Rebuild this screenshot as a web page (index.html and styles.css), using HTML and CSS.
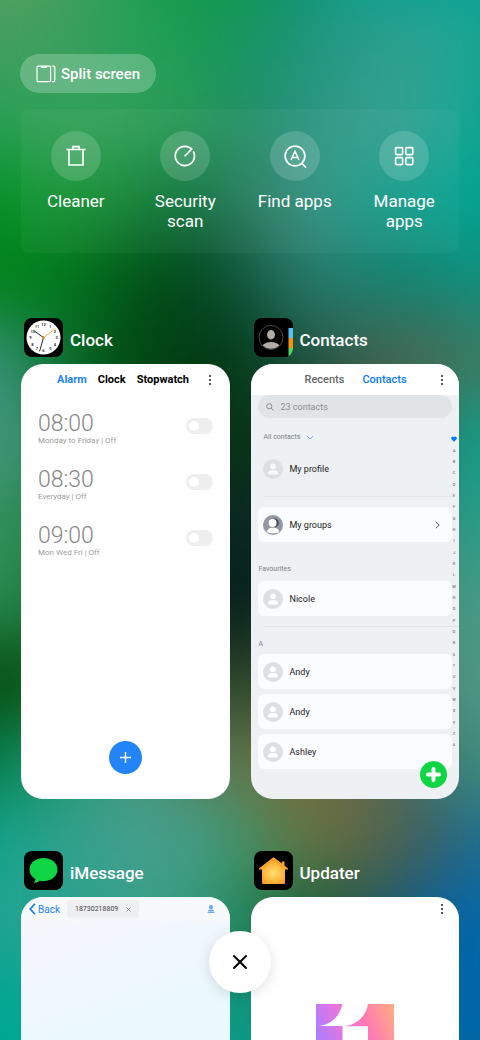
FILE: index.html
```html
<!DOCTYPE html>
<html lang="en">
<head>
    <meta charset="UTF-8">
    <meta name="viewport" content="width=device-width, initial-scale=1.0">
    <title>Recent apps</title>
    <link rel="stylesheet" href="styles.css">
</head>
<body>

    <!-- blurred wallpaper, one colour band per row -->
    <div class="backdrop" aria-hidden="true">
        <div class="wallpaper">
            <i></i><i></i><i></i><i></i><i></i><i></i><i></i><i></i><i></i><i></i><i></i><i></i><i></i><i></i><i></i>
        </div>
    </div>

    <main class="recents">
        <button class="split" type="button">
            <svg width="20" height="18" viewBox="0 0 20 18" fill="none" stroke="#fff" stroke-width="1.2">
                <rect x="1" y="1.2" width="13.6" height="15.4" rx="1.2"/>
                <path d="M5 1.6h5.600v.7a.6.6 0 0 1-.6.6H5.600a.6.6 0 0 1-.6-.6z" fill="#fff" stroke="none"/>
                <path d="M16.200 1.200h1.600a1 1 0 0 1 1 1v13.400a1 1 0 0 1-1 1h-1.600"/>
            </svg>
            Split screen
        </button>

        <nav class="tools">
            <button class="tool" type="button">
                <span class="tool-icon">
                    <svg width="24" height="24" viewBox="0 0 24 24" fill="none" stroke="#fff" stroke-width="1.700">
                        <path d="M2.500 5.500h19M5 5.500v15.500h14V5.500M8.800 5.300V2.700h6.400v2.600" stroke-linejoin="round"/>
                    </svg>
                </span>
                Cleaner
            </button>
            <button class="tool" type="button">
                <span class="tool-icon">
                    <svg width="24" height="24" viewBox="0 0 24 24" fill="none" stroke="#fff" stroke-width="1.700" stroke-linecap="round" stroke-linejoin="round">
                        <path d="M20.600 8A9.600 9.600 0 1 1 15.800 3.200L18.800 5 12 11.900"/>
                    </svg>
                </span>
                Security scan
            </button>
            <button class="tool" type="button">
                <span class="tool-icon">
                    <svg width="24" height="24" viewBox="0 0 24 24" fill="none" stroke="#fff" stroke-width="1.700">
                        <circle cx="12" cy="12" r="9.900"/>
                        <path d="M18.500 19l4.500 4.500"/>
                        <path d="M8 16l4-8.800L16 16M9.400 13.400h5.200" stroke-width="1.500"/>
                    </svg>
                </span>
                Find apps
            </button>
            <button class="tool" type="button">
                <span class="tool-icon">
                    <svg width="24" height="24" viewBox="0 0 24 24" fill="none" stroke="#fff" stroke-width="1.600">
                        <rect x="3.600" y="3.600" width="7" height="7" rx="1"/>
                        <rect x="13.800" y="3.600" width="7" height="7" rx="1"/>
                        <rect x="3.600" y="13.600" width="7" height="7" rx="1"/>
                        <rect x="13.800" y="13.600" width="7" height="7" rx="1"/>
                    </svg>
                </span>
                Manage apps
            </button>
        </nav>

        <div class="apps">

            <section class="app">
                <h2 class="app-title">
                    <svg class="app-icon" viewBox="0 0 39 39">
                        <rect width="39" height="39" rx="8"/>
                        <circle cx="19.500" cy="19.500" r="17" fill="#fff"/>
                        <g class="dial">
                            <text x="19.500" y="8">12</text><text x="26.300" y="10">1</text><text x="31" y="14.800">2</text>
                            <text x="32.700" y="21">3</text><text x="31" y="27.700">4</text><text x="26.300" y="32.300">5</text>
                            <text x="19.500" y="34.300">6</text><text x="12.900" y="32.300">7</text><text x="8.300" y="27.700">8</text>
                            <text x="6.500" y="21">9</text><text x="8.800" y="14.800">10</text><text x="13.100" y="10">11</text>
                        </g>
                        <path d="M19.500 19.500L11 13.500M19.500 19.500L15.700 33" stroke="#111" stroke-width=".9" stroke-linecap="round"/>
                        <path d="M17.800 21L31.500 10.500" stroke="#f79a1c" stroke-width=".8"/>
                        <circle cx="19.500" cy="19.500" r="1.200" fill="#d98a26"/>
                    </svg>
                    Clock
                </h2>
                <div class="card clock">
                    <header class="bar">
                        <div class="tabs clock-tabs">
                            <a class="active" href="#alarm">Alarm</a>
                            <a href="#clock">Clock</a>
                            <a href="#stopwatch">Stopwatch</a>
                        </div>
                        <button class="more" type="button" aria-label="More"><svg width="4" height="12" viewBox="0 0 4 12"><circle cx="2" cy="2" r=".9"/><circle cx="2" cy="6" r=".9"/><circle cx="2" cy="10" r=".9"/></svg></button>
                    </header>
                    <div class="alarms">
                        <label class="alarm">
                            <span><b>08:00</b><small>Monday to Friday | Off</small></span>
                            <input class="switch" type="checkbox">
                        </label>
                        <label class="alarm">
                            <span><b>08:30</b><small>Everyday | Off</small></span>
                            <input class="switch" type="checkbox">
                        </label>
                        <label class="alarm">
                            <span><b>09:00</b><small>Mon Wed Fri | Off</small></span>
                            <input class="switch" type="checkbox">
                        </label>
                    </div>
                    <button class="add-alarm" type="button" aria-label="Add alarm">
                        <svg width="13" height="13" viewBox="0 0 13 13" stroke="#fff" stroke-width="1.400"><path d="M6.500 1v11M1 6.500h11"/></svg>
                    </button>
                </div>
            </section>

            <section class="app">
                <h2 class="app-title">
                    <svg class="app-icon" viewBox="0 0 39 39">
                        <defs>
                            <clipPath id="tile"><rect width="39" height="39" rx="8"/></clipPath>
                            <clipPath id="face"><circle cx="17" cy="19.500" r="11.300"/></clipPath>
                        </defs>
                        <g clip-path="url(#tile)">
                            <rect width="39" height="39"/>
                            <path d="M34.500 10H39v10h-4.500z" fill="#5ac0f5"/>
                            <path d="M34.500 20H39v10h-4.500z" fill="#f8900f"/>
                            <path d="M34.500 30H39v9h-4.500z" fill="#4cd363"/>
                        </g>
                        <circle cx="17" cy="19.500" r="12" fill="none" stroke="#777" stroke-width=".6"/>
                        <g clip-path="url(#face)" fill="#b5aca5">
                            <ellipse cx="17" cy="16.700" rx="4" ry="4.700"/>
                            <ellipse cx="17" cy="30.500" rx="10" ry="6.500"/>
                        </g>
                    </svg>
                    Contacts
                </h2>
                <div class="card contacts">
                    <header class="bar">
                        <div class="tabs contact-tabs">
                            <a href="#recents">Recents</a>
                            <a class="active" href="#contacts">Contacts</a>
                        </div>
                        <button class="more" type="button" aria-label="More"><svg width="4" height="12" viewBox="0 0 4 12"><circle cx="2" cy="2" r=".9"/><circle cx="2" cy="6" r=".9"/><circle cx="2" cy="10" r=".9"/></svg></button>
                    </header>
                    <div class="contact-body">
                        <label class="search">
                            <svg width="8" height="8" viewBox="0 0 9 9" fill="none" stroke="#7c8083"><circle cx="3.700" cy="3.700" r="2.900"/><path d="M5.900 5.900l2.600 2.600"/></svg>
                            <input type="search" placeholder="23 contacts" aria-label="Search contacts">
                        </label>
                        <button class="filter" type="button">
                            All contacts
                            <svg width="8" height="5" viewBox="0 0 8 5" fill="none" stroke="#6c8fe8" stroke-width=".8"><path d="M.8.8L4 4 7.200.8"/></svg>
                        </button>
                        <a class="person plain" href="#me">
                            <svg class="avatar" viewBox="0 0 20 20"><circle cx="10" cy="10" r="10" fill="#dcdfe4"/><circle cx="10" cy="7.300" r="2.900" fill="#f8f9fb"/><path d="M5 14.300c0-2 1.600-3 3-3h4c1.400 0 3 1 3 3q0 1.200-1.200 1.200H6.200Q5 15.500 5 14.300z" fill="#f8f9fb"/></svg>
                            My profile
                        </a>
                        <hr>
                        <a class="person" href="#groups">
                            <svg class="avatar" viewBox="0 0 20 20">
                                <clipPath id="group"><circle cx="10" cy="10" r="10"/></clipPath>
                                <g clip-path="url(#group)">
                                    <rect width="20" height="20" fill="#9297a6"/>
                                    <circle cx="11.500" cy="7.800" r="4.400" fill="#484c58"/>
                                    <circle cx="9.600" cy="8" r="4" fill="#fff"/>
                                    <path d="M4 17c0-3 2.500-4.200 6-4.200s6 1.200 6 4.200c-2 1.800-10 1.800-12 0z" fill="#fff"/>
                                </g>
                            </svg>
                            My groups
                            <svg class="chevron" width="5" height="8" viewBox="0 0 5 8" fill="none" stroke="#555"><path d="M.8.8L4.200 4 .8 7.200"/></svg>
                        </a>
                        <h3 class="favourites">Favourites</h3>
                        <a class="person" href="#nicole">
                            <svg class="avatar" viewBox="0 0 20 20"><circle cx="10" cy="10" r="10" fill="#dcdfe4"/><circle cx="10" cy="7.300" r="2.900" fill="#fff"/><path d="M5 14.300c0-2 1.600-3 3-3h4c1.400 0 3 1 3 3q0 1.200-1.200 1.200H6.200Q5 15.500 5 14.300z" fill="#fff"/></svg>
                            Nicole
                        </a>
                        <hr>
                        <h3>A</h3>
                        <div class="people">
                            <a class="person" href="#andy">
                                <svg class="avatar" viewBox="0 0 20 20"><circle cx="10" cy="10" r="10" fill="#dcdfe4"/><circle cx="10" cy="7.300" r="2.900" fill="#fff"/><path d="M5 14.300c0-2 1.600-3 3-3h4c1.400 0 3 1 3 3q0 1.200-1.200 1.200H6.200Q5 15.500 5 14.300z" fill="#fff"/></svg>
                                Andy
                            </a>
                            <a class="person" href="#andy-2">
                                <svg class="avatar" viewBox="0 0 20 20"><circle cx="10" cy="10" r="10" fill="#dcdfe4"/><circle cx="10" cy="7.300" r="2.900" fill="#fff"/><path d="M5 14.300c0-2 1.600-3 3-3h4c1.400 0 3 1 3 3q0 1.200-1.200 1.200H6.200Q5 15.500 5 14.300z" fill="#fff"/></svg>
                                Andy
                            </a>
                            <a class="person" href="#ashley">
                                <svg class="avatar" viewBox="0 0 20 20"><circle cx="10" cy="10" r="10" fill="#dcdfe4"/><circle cx="10" cy="7.300" r="2.900" fill="#fff"/><path d="M5 14.300c0-2 1.600-3 3-3h4c1.400 0 3 1 3 3q0 1.200-1.200 1.200H6.200Q5 15.500 5 14.300z" fill="#fff"/></svg>
                                Ashley
                            </a>
                        </div>
                    </div>
                    <div class="index">
                        <svg width="6" height="6" viewBox="0 0 6 6"><path d="M3 5.800L.5 3.300C-.6 1.500 1.500-.4 3 1.100 4.500-.4 6.600 1.500 5.500 3.300z" fill="#0b7bf5"/></svg>
                        <span>A</span><span>B</span><span>C</span><span>D</span><span>E</span><span>F</span><span>G</span><span>H</span><span>I</span><span>J</span><span>K</span><span>L</span><span>M</span><span>N</span><span>O</span><span>P</span><span>Q</span><span>R</span><span>S</span><span>T</span><span>U</span><span>V</span><span>W</span><span>X</span><span>Y</span><span>Z</span><span>#</span>
                    </div>
                    <button class="add-contact" type="button" aria-label="Add contact">
                        <svg width="15" height="15" viewBox="0 0 15 15" stroke="#fff" stroke-width="4" stroke-linecap="round"><path d="M7.500 2v11M2 7.500h11"/></svg>
                    </button>
                </div>
            </section>

            <section class="app">
                <h2 class="app-title">
                    <svg class="app-icon" viewBox="0 0 39 39">
                        <rect width="39" height="39" rx="8"/>
                        <path d="M19.500 7C11.500 7 5.500 12 5.500 18.600c0 4 2.200 7.500 5.900 9.600-.1 1.300-.6 2.500-1.600 3.700 2.400 0 4.300-.9 5.900-2.200 1.200.3 2.500.5 3.800.5 8 0 14-5 14-11.600S27.500 7 19.500 7z" fill="#10d544"/>
                    </svg>
                    iMessage
                </h2>
                <div class="card message">
                    <header class="bar message-bar">
                        <a class="back" href="#back">
                            <svg width="7" height="12" viewBox="0 0 7 12" fill="none" stroke="#087bf5" stroke-width="1.600"><path d="M6 .8L1.200 6 6 11.200"/></svg>
                            Back
                        </a>
                        <button class="number" type="button">
                            18730218809
                            <svg width="5" height="5" viewBox="0 0 5 5" stroke="#777" stroke-width=".7"><path d="M.4.4l4.200 4.200M4.600.4L.4 4.600"/></svg>
                        </button>
                        <svg class="user" width="8" height="8" viewBox="0 0 8 8" fill="#6aa9f2"><circle cx="4" cy="2.100" r="2.100"/><path d="M.8 6.600c.2-1.800 1.600-2.100 3.200-2.100s3 .3 3.200 2.100zM.6 6.900h6.800V8H.6z"/></svg>
                    </header>
                </div>
            </section>

            <section class="app">
                <h2 class="app-title">
                    <svg class="app-icon" viewBox="0 0 39 39">
                        <defs>
                            <radialGradient id="home" cx=".5" cy=".58" r=".55"><stop stop-color="#ffe071"/><stop offset="1" stop-color="#fb9a1c"/></radialGradient>
                        </defs>
                        <rect width="39" height="39" rx="8"/>
                        <path d="M19.500 6.200L28 12.600V10.600h2.500v4L34 17.500v1h-3V32q0 1-1 1H9q-1 0-1-1V18.500H5v-1z" fill="url(#home)"/>
                        <path d="M5 18L19.500 6.400 34 18h-3.400L19.500 9.400 8.400 18z" fill="#fba42c"/>
                    </svg>
                    Updater
                </h2>
                <div class="card updater">
                    <header class="bar updater-bar">
                        <button class="more" type="button" aria-label="More"><svg width="4" height="12" viewBox="0 0 4 12"><circle cx="2" cy="2" r=".9"/><circle cx="2" cy="6" r=".9"/><circle cx="2" cy="10" r=".9"/></svg></button>
                    </header>
                    <svg class="eleven" width="78" height="78" viewBox="0 0 78 78">
                        <defs>
                            <linearGradient id="sunset" x1="0" y1=".4" x2="1" y2="0"><stop stop-color="#a97eff"/><stop offset=".3" stop-color="#e077e3"/><stop offset=".6" stop-color="#ff79b5"/><stop offset="1" stop-color="#ffad80"/></linearGradient>
                        </defs>
                        <path d="M0 0H26.500C23 14 14 21 2 22H26.500V78H0zM52 0H78V78H52V22.300H28C40 21 50 13 52 0z" fill="url(#sunset)"/>
                    </svg>
                </div>
            </section>

        </div>
    </main>

    <button class="close" type="button" aria-label="Close all">
        <svg width="16" height="16" viewBox="0 0 16 16" stroke="#000" stroke-width="2" stroke-linecap="round"><path d="M2 2l12 12M14 2L2 14"/></svg>
    </button>

</body>
</html>
```
FILE: styles.css
```css
* {
    margin: 0;
    padding: 0;
    box-sizing: border-box;
}

body {
    position: relative;
    height: 100vh;
    overflow: hidden;
    font-family: Roboto, 'Noto Sans', sans-serif;
    background-color: #12805a;
    color: #222;
}

button {
    border: 0;
    background: none;
    color: inherit;
    font: inherit;
}

a {
    color: inherit;
    text-decoration: none;
}

svg {
    display: block;
    flex: none;
}

/* Wallpaper */
.backdrop {
    position: absolute;
    inset: 0;
    overflow: hidden;
}

.wallpaper {
    position: absolute;
    inset: -80px -12.5vw;
    display: flex;
    flex-direction: column;
    filter: blur(34px);
}

.wallpaper i {
    flex: 1;
}

.wallpaper i:nth-child(1) { background: linear-gradient(90deg, #5f9f62, #5f9f62, #4a9f5c, #2ba057, #0c9a44, #109448, #109270, #06a08e, #08a294, #06a496, #06a496); }
.wallpaper i:nth-child(2) { background: linear-gradient(90deg, #4a9f5f, #459f5f, #3a9f5e, #2ba05a, #1a9d52, #169560, #1d937a, #2a9c8c, #2fa291, #18a594, #10a594); }
.wallpaper i:nth-child(3) { background: linear-gradient(90deg, #28a055, #28a055, #35a25c, #33a25a, #2a9c56, #208f63, #279280, #379f8d, #34a391, #0ea594, #00a594); }
.wallpaper i:nth-child(4) { background: linear-gradient(90deg, #009020, #049026, #159634, #148a34, #067038, #28785a, #3a9080, #1e9a8a, #0ca08e, #00a592, #00a592); }
.wallpaper i:nth-child(5) { background: linear-gradient(90deg, #008010, #008018, #007a1c, #025a18, #014418, #0c5038, #2e7a6c, #1a7f6d, #148470, #109080, #109080); }
.wallpaper i:nth-child(6) { background: linear-gradient(90deg, #459c8a, #38947c, #0a702c, #014c12, #013c12, #023816, #185040, #45604f, #4a6650, #407860, #388468); }
.wallpaper i:nth-child(7) { background: linear-gradient(90deg, #4a9c88, #4a9c88, #258050, #02501a, #02380e, #03300e, #1b3a2c, #284c3c, #247660, #14a592, #00a894); }
.wallpaper i:nth-child(8) { background: linear-gradient(90deg, #379860, #379560, #207840, #064020, #082820, #082622, #102a28, #205048, #308870, #2ca08e, #20a490); }
.wallpaper i:nth-child(9) { background: linear-gradient(90deg, #2a9455, #2a9055, #187038, #064020, #052018, #021a1a, #103020, #285040, #388870, #4c9f8c, #4ca08e); }
.wallpaper i:nth-child(10) { background: linear-gradient(90deg, #003800, #054808, #106020, #306038, #304828, #204028, #485030, #506848, #488070, #529c8c, #589e90); }
.wallpaper i:nth-child(11) { background: linear-gradient(90deg, #007844, #067c4a, #209870, #409c80, #508868, #607448, #806838, #686848, #407068, #409080, #449484); }
.wallpaper i:nth-child(12) { background: linear-gradient(90deg, #08a68e, #12a48c, #30a08c, #42a08e, #48a090, #3c966c, #687640, #626844, #3f5c58, #1c6e98, #1070a4); }
.wallpaper i:nth-child(13) { background: linear-gradient(90deg, #28a494, #22a492, #28a290, #34a088, #3c9c80, #208a60, #165a28, #245850, #105c90, #0068b0, #0068b4); }
.wallpaper i:nth-child(14) { background: linear-gradient(90deg, #00a894, #00a894, #08a490, #10a08c, #149c84, #10987c, #108878, #087888, #00689c, #0064ac, #0064b0); }
.wallpaper i:nth-child(15) { background: linear-gradient(90deg, #00a894, #00a894, #00a894, #04a490, #08a48c, #08a08c, #088c88, #047c90, #006c9c, #0066a8, #0066b0); }

.recents {
    position: relative;
    height: 100%;
    overflow: hidden;
    padding: 54px 21px 0;
}

.split {
    display: flex;
    align-items: center;
    gap: 5px;
    height: 39px;
    padding: 0 16px;
    margin-left: -1px;
    border-radius: 20px;
    background: rgba(255, 255, 255, 0.23);
    color: #fff;
    font-size: 15px;
    font-weight: 500;
}

/* Shortcuts */
.tools {
    display: grid;
    grid-template-columns: repeat(4, 1fr);
    height: 144px;
    margin-top: 16px;
    padding-top: 22px;
    border-radius: 8px;
    background: rgba(255, 255, 255, 0.04);
}

.tool {
    display: flex;
    flex-direction: column;
    align-items: center;
    padding: 0 16px;
    color: #fff;
    font-size: 17px;
    line-height: 20px;
}

.tool-icon {
    display: grid;
    place-items: center;
    width: 50px;
    height: 50px;
    margin-bottom: 10px;
    border-radius: 50%;
    background: rgba(255, 255, 255, 0.16);
}

/* App cards */
.apps {
    display: grid;
    grid-template-columns: 1fr 1fr;
    gap: 52px 21px;
    margin-top: 65px;
}

.app-title {
    display: flex;
    align-items: center;
    gap: 7px;
    height: 39px;
    margin: 0 3px 7px;
    color: #fff;
    font-size: 17px;
    font-weight: 500;
    line-height: 20px;
    padding-top: 4px;
}

.app-icon {
    width: 39px;
    height: 39px;
    margin-top: -4px;
}

.dial {
    font-size: 4px;
    font-weight: 500;
    text-anchor: middle;
}

.card {
    position: relative;
    display: flex;
    flex-direction: column;
    height: 435px;
    border-radius: 22px;
    background: #fff;
    overflow: hidden;
}

.bar {
    display: flex;
    align-items: center;
    height: 31px;
    padding-right: 15px;
}

.tabs {
    display: flex;
    font-size: 11px;
}

.more {
    margin-left: auto;
}

/* Clock */
.clock-tabs {
    gap: 11px;
    padding-left: 36px;
    color: #000;
    font-weight: 700;
}

.clock-tabs .active {
    color: #1f80f5;
}

.clock .more {
    margin-right: 3px;
}

.alarms {
    display: flex;
    flex-direction: column;
    gap: 16px;
    padding: 14px 17px 0;
}

.alarm {
    display: flex;
    align-items: center;
    justify-content: space-between;
    height: 40px;
    color: #888;
}

.alarm b {
    display: block;
    font-size: 23px;
    font-weight: 300;
    line-height: 24px;
}

.alarm small {
    display: block;
    font-size: 8px;
    line-height: 10px;
    color: #9c9c9c;
}

.switch {
    appearance: none;
    width: 27px;
    height: 16px;
    margin-top: -6px;
    padding: 3px;
    border-radius: 8px;
    background: #eee;
}

.switch::before {
    content: "";
    display: block;
    width: 10px;
    height: 10px;
    border-radius: 50%;
    background: #fff;
}

.switch:checked {
    background: #1f80f5;
    padding-left: 14px;
}

.add-alarm {
    display: grid;
    place-items: center;
    width: 33px;
    height: 33px;
    margin: auto auto 25px;
    border-radius: 50%;
    background: #2384f7;
}

/* Contacts */
.contacts {
    background: #edf1f4;
}

.contacts .bar {
    background: #fff;
}

.contact-tabs {
    gap: 18px;
    padding-left: 54px;
    color: #666;
    font-weight: 500;
}

.contact-tabs .active {
    color: #087bf5;
}

.contact-body {
    padding: 0 7px;
}

.search {
    display: flex;
    align-items: center;
    gap: 7px;
    height: 23px;
    padding: 0 8px;
    border-radius: 12px;
    background: #e0e4e7;
}

.search input {
    width: 100%;
    border: 0;
    background: none;
    font: 9px Roboto, sans-serif;
}

.search input::placeholder {
    color: #8b8f92;
}

.filter {
    display: flex;
    align-items: center;
    gap: 6px;
    height: 12px;
    margin: 13px 6px 16px;
    color: #777b7e;
    font-size: 7px;
}

.person {
    display: flex;
    align-items: center;
    gap: 7px;
    height: 35px;
    padding: 0 12px 0 5px;
    border-radius: 6px;
    background: #fbfcfe;
    font-size: 9px;
}

.person.plain {
    height: 20px;
    background: none;
}

.avatar {
    width: 20px;
    height: 20px;
}

.chevron {
    margin-left: auto;
}

.contacts hr {
    height: 1px;
    margin: 17px 0 10px 6px;
    border: 0;
    background: #e2e6e9;
}

.contacts .person:not(.plain) + hr {
    margin: 10px -7px 11px 6px;
}

.contacts h3 {
    padding-left: 1px;
    height: 16px;
    color: #7c8083;
    font-size: 7px;
    font-weight: 400;
    line-height: 12px;
}

.contacts .favourites {
    height: 18px;
    margin: 21px 0 0;
}

.people {
    display: grid;
    gap: 5px;
}

.index {
    position: absolute;
    top: 72px;
    right: 2px;
    width: 6px;
    height: 315px;
    display: flex;
    flex-direction: column;
    align-items: center;
    color: #777;
    font-size: 4px;
    font-weight: 500;
    line-height: 6px;
}

.index > * {
    flex: 1;
}

.index > svg {
    flex: 0 0 6px;
    margin-bottom: 3px;
}

.index span {
    display: grid;
    place-items: center;
}

.add-contact {
    position: absolute;
    right: 12px;
    bottom: 11px;
    display: grid;
    place-items: center;
    width: 27px;
    height: 27px;
    border-radius: 50%;
    background: #10d544;
}

/* iMessage */
.message {
    background: linear-gradient(160deg, #faf5fd, #e9f9fe 35%);
}

.message-bar {
    height: 24px;
    padding: 0 15px 0 8px;
    background: #f6f8fa;
}

.back {
    display: flex;
    align-items: center;
    gap: 2px;
    color: #2384f7;
    font-size: 10px;
}

.number {
    display: flex;
    align-items: center;
    gap: 8px;
    height: 18px;
    margin-left: 7px;
    padding: 0 8px;
    border-radius: 4px;
    background: #eeeff0;
    color: #444;
    font-size: 7px;
}

.user {
    margin-left: auto;
}

/* Updater */
.updater-bar {
    height: 24px;
}

.eleven {
    margin: 83px auto 0;
}

.close {
    position: absolute;
    left: 50%;
    bottom: 47px;
    display: grid;
    place-items: center;
    width: 62px;
    height: 62px;
    margin-left: -31px;
    border-radius: 50%;
    background: #fff;
    box-shadow: 0 3px 14px rgba(0, 0, 0, 0.12);
}
```
